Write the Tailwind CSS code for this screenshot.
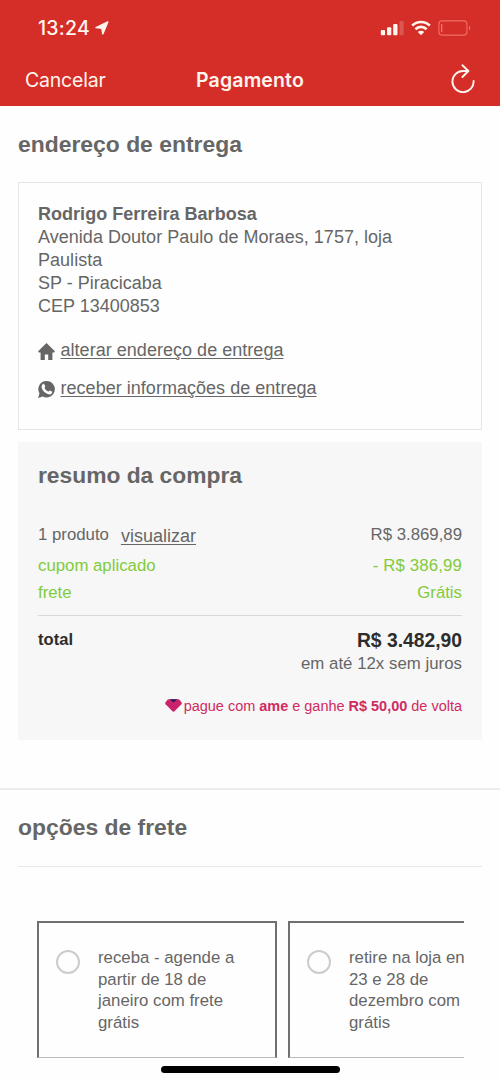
<!DOCTYPE html>
<html lang="pt-BR">
<head>
<meta charset="utf-8">
<title>Pagamento</title>
<script src="https://cdn.jsdelivr.net/npm/@tailwindcss/browser@4"></script>
</head>
<body class="bg-white">
<div class="relative w-[500px] h-[1082px] overflow-hidden bg-[#fefefe] font-['Liberation_Sans',Arial,sans-serif] text-[#666]">
  <header class="h-[106px] bg-[#d52d27] text-[#fff5ee] font-['Inter',sans-serif]">
    <div class="flex h-14 items-center justify-between pl-[38px] pr-[29px]">
      <div class="flex items-center gap-[5px]">
        <span class="text-[19.5px] font-medium leading-6 tracking-[0.25px]">13:24</span>
        <svg class="h-[14px] w-[14px]" viewBox="0 0 14 14" fill="currentColor"><path d="M12.800.9 7.800 12.900 6.800 7.300 1 6.600z" stroke="currentColor" stroke-width="1.4" stroke-linejoin="round"/></svg>
      </div>
      <div class="flex items-center">
        <svg class="h-[16px] w-[24px]" viewBox="0 0 24 16" fill="currentColor"><rect x=".8" y="10" width="4.300" height="5.300" rx="1"/><rect x="7" y="7.300" width="4.300" height="8" rx="1"/><rect x="13.200" y="4" width="4.300" height="11.300" rx="1"/><rect x="19.400" y="1" width="4.300" height="14.300" rx="1" opacity=".2"/></svg>
        <svg class="ml-[7px] h-[16px] w-[20px]" viewBox="0 0 20 16" fill="none" stroke="currentColor" stroke-width="2.7"><path d="M1.200 5.600a12.600 12.600 0 0 1 17.600 0"/><path d="M4.400 9.200a8 8 0 0 1 11.200 0"/><path d="M10 15.200 6.800 12a4.600 4.600 0 0 1 6.400 0z" fill="currentColor" stroke="none"/></svg>
        <svg class="ml-[7px] h-[16px] w-[33px] text-[#ff8a78]" viewBox="0 0 33 16" fill="none" stroke="currentColor"><rect x=".9" y=".9" width="28" height="14.200" rx="3" stroke-width="1.1" opacity=".7"/><path d="M3.700 4v8" stroke-width="1.3" opacity=".8"/><path d="M31 5.800c1.600.6 1.600 3.800 0 4.400z" fill="currentColor" stroke="none" opacity=".8"/></svg>
      </div>
    </div>
    <div class="grid h-12 grid-cols-3 items-center pl-[25px] pr-[25px]">
      <span class="text-[19.5px] leading-6 tracking-[-0.2px]">Cancelar</span>
      <span class="text-center text-[19.5px] font-semibold leading-6 tracking-[0.15px]">Pagamento</span>
      <svg class="mb-[4px] h-[30px] w-[24px] justify-self-end" viewBox="0 0 24 30" fill="none" stroke="currentColor" stroke-width="1.9" stroke-linecap="round" stroke-linejoin="round"><path d="M17.300 8H12A10.600 10.600 0 1 0 22.600 18" /><path d="m11.400 2.300 6 5.700-6 6"/></svg>
    </div>
  </header>

  <main>
    <section class="px-[18px] pt-[23px]">
      <h2 class="text-[22.9px] font-bold leading-[30px]">endereço de entrega</h2>
      <div class="mt-[23px] h-[248px] border-[1.5px] border-[#e6e6e6] px-[19px] pt-[20px] text-[18px] leading-[23px]">
        <p class="font-bold tracking-[0.03px]">Rodrigo Ferreira Barbosa</p>
        <p class="tracking-[0.03px]">Avenida Doutor Paulo de Moraes, 1757, loja<br>Paulista</p>
        <p>SP - Piracicaba</p>
        <p>CEP 13400853</p>
        <a class="mt-[21px] flex items-center gap-[5.500px]">
          <svg class="mt-[2px] h-[17px] w-[17px]" viewBox="0 0 17 17" fill="currentColor"><path d="M8.500 0 16.900 8.300l-.7 1.200H14.400V16.900H10.200V11.400H6.800V16.900H2.600V9.500H.8L.1 8.300z"/></svg>
          <span class="tracking-[0.03px] underline decoration-1 underline-offset-2">alterar endereço de entrega</span>
        </a>
        <a class="mt-[15px] flex items-center gap-[5.500px]">
          <svg class="mt-[1px] h-[17px] w-[17px]" viewBox="0 0 17 17"><path fill="currentColor" d="M8.700 0a8.200 8.200 0 1 1-4 15.400L0 16.900l1.500-4.500A8.200 8.200 0 0 1 8.700 0z"/><path fill="#fff" d="M4.700 3.200c.6-.6 1.200-.5 1.500.1l1.100 2.200c.1.500-.8 1.200-.8 1.600.7 1.600 2 2.800 3.600 3.400.6 0 1.200-1.200 1.700-1.100l2.200 1.200c.5.400.2 1.300-.3 1.800-1 1.100-2.400 1.300-3.900.7-2.800-1-5.100-3.100-6.100-6-.3-1.500.1-2.900 1-3.900z"/></svg>
          <span class="tracking-[0.03px] underline decoration-1 underline-offset-2">receber informações de entrega</span>
        </a>
      </div>
    </section>

    <section class="mx-[18px] mt-3 h-[298px] bg-[#f7f7f7] px-5 pt-[18px] text-[16.8px]">
      <h2 class="text-[22.8px] font-bold leading-[30px]">resumo da compra</h2>
      <div class="mt-[34px] flex justify-between leading-[22px]">
        <div class="flex gap-[12px]"><span>1 produto</span><a class="mt-[1px] text-[18px] underline decoration-1 underline-offset-2">visualizar</a></div>
        <span>R$ 3.869,89</span>
      </div>
      <div class="mt-[7px] flex justify-between leading-[24px] text-[#82cb3b]"><span>cupom aplicado</span><span class="tracking-[0.15px]">- R$ 386,99</span></div>
      <div class="mt-[2px] flex justify-between leading-[26px] text-[#82cb3b]"><span>frete</span><span>Grátis</span></div>
      <div class="mt-[9px] flex justify-between border-t border-[#d8d8d8] pt-[12px] text-[#2d2d2d]">
        <span class="text-[16.600px] font-bold leading-[24px]">total</span>
        <div class="text-right">
          <p class="text-[19.300px] font-bold leading-[26px]">R$ 3.482,90</p>
          <p class="leading-[20px] tracking-[0.03px] text-[#666]">em até 12x sem juros</p>
        </div>
      </div>
      <div class="mt-[21px] flex items-center justify-end gap-[2px] text-[14.480px] leading-[22px] text-[#d02a61]">
        <svg class="mb-[1px] h-[13px] w-[17px]" viewBox="0 0 17 13"><path fill="#c9246b" d="M3.600.2h9.800Q14.200.2 14.700.9L16.600 3.600Q17.100 4.500 16.400 5.300L9.800 12.100Q8.500 13.300 7.200 12.100L.6 5.300Q-.1 4.500.4 3.600L2.300.9Q2.800.2 3.600.2z"/><path fill="#28165f" d="M4.800.2h7.400L8.500 3.500z"/></svg>
        <p>pague com <b>ame</b> e ganhe <b>R$ 50,00</b> de volta</p>
      </div>
    </section>

    <section class="mt-12 border-t-2 border-[#ececec] px-[18px] pt-[22px]">
      <h2 class="text-[22.9px] font-bold leading-[30px]">opções de frete</h2>
      <div class="mt-[24px] border-t-[1.500px] border-[#e8e8e8] pt-[54px] pl-[19px] pr-[18px]">
        <div class="flex h-[137px] gap-[11px] overflow-hidden text-[16.8px] leading-[21.7px]">
          <label class="flex w-[240px] shrink-0 border-2 border-b border-[#707070] border-b-[#bbb] pl-[17px] pt-[24px]">
            <span class="mt-[3px] h-6 w-6 shrink-0 rounded-full border-2 border-[#ccc]"></span>
            <span class="ml-[18px] whitespace-nowrap">receba - agende a<br>partir de 18 de<br>janeiro com frete<br>grátis</span>
          </label>
          <label class="flex w-[240px] shrink-0 border-2 border-b border-[#707070] border-b-[#bbb] pl-[17px] pt-[24px]">
            <span class="mt-[3px] h-6 w-6 shrink-0 rounded-full border-2 border-[#ccc]"></span>
            <span class="ml-[18px] whitespace-nowrap">retire na loja en<br>23 e 28 de<br>dezembro com<br>grátis</span>
          </label>
        </div>
      </div>
    </section>
  </main>
  <div class="absolute left-[161px] top-[1066px] h-[7px] w-[179px] rounded-full bg-black"></div>
</div>
</body>
</html>
